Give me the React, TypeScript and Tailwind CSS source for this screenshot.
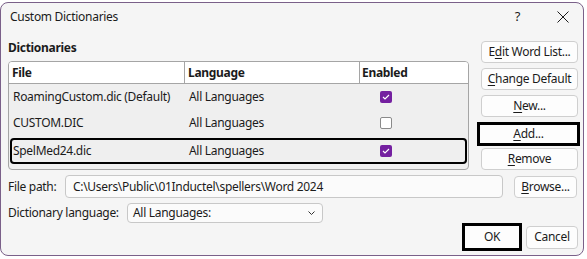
import React from "react";

const font = { fontFamily: '"Noto Sans", "Segoe UI", Arial, sans-serif' };

function U({ children }: { children: React.ReactNode }) {
  return <span className="underline underline-offset-[2px] decoration-[1px]">{children}</span>;
}

function Btn({ children, className = "" }: { children: React.ReactNode; className?: string }) {
  return (
    <div
      className={
        "flex items-center justify-center rounded-[4px] border border-[#cfcfcf] bg-[#fdfdfd] text-[12px] text-[#1b1b1b] " +
        className
      }
    >
      {children}
    </div>
  );
}

function Check({ checked }: { checked: boolean }) {
  if (checked)
    return (
      <div className="flex h-[12px] w-[12px] items-center justify-center rounded-[2px] bg-[#7420a0]">
        <svg width="8" height="6" viewBox="0 0 8 6">
          <path d="M1 3 L3 5 L7 1" stroke="white" strokeWidth="1.1" fill="none" />
        </svg>
      </div>
    );
  return <div className="h-[12px] w-[12px] rounded-[2px] border border-[#8a8a8a] bg-white" />;
}

function Row({ file, checked, selected }: { file: string; checked: boolean; selected?: boolean }) {
  return (
    <div
      className={
        "flex items-center text-[12px] text-[#1b1b1b] " +
        (selected ? "mx-[1px] mt-[2px] h-[26px] rounded-[4px] border-2 border-black" : "h-[26px]")
      }
    >
      <div className={selected ? "w-[173px] pl-[1px]" : "w-[176px] pl-[4px]"}>{file}</div>
      <div className="w-[175px] pl-[4px]">All Languages</div>
      <div className="flex flex-1 justify-start pl-[20px]">
        <Check checked={checked} />
      </div>
    </div>
  );
}

export default function App() {
  return (
    <div className="h-[259px] w-[587px] overflow-hidden bg-white pt-[2px] tracking-[-0.3px]" style={font}>
      <div className="flex h-[254px] w-[584px] flex-col rounded-[8px] border border-[#7a6089] bg-[#f5f5f5]">
        {/* title bar */}
        <div className="flex h-[28px] items-center pl-[9px] text-[12px] text-[#1b1b1b]">
          <div className="flex-1">Custom Dictionaries</div>
          <div className="mr-[37px] text-[13px]">?</div>
          <svg width="12" height="12" viewBox="0 0 12 12" className="mr-[14px]">
            <path d="M0.5 0.5 L11.5 11.5 M11.5 0.5 L0.5 11.5" stroke="#1b1b1b" strokeWidth="1" />
          </svg>
        </div>
        {/* main */}
        <div className="flex pl-[7px]">
          <div className="flex w-[461px] flex-col pt-[9px]">
            <div className="h-[16px] text-[12px] font-bold leading-[16px] text-[#1b1b1b]">Dictionaries</div>
            <div className="mt-[5px] h-[109px] overflow-hidden rounded-[4px] border border-[#a5a5a5] bg-[#efefef]">
              <div className="flex h-[22px] items-center border-b border-[#a5a5a5] bg-white text-[12px] font-bold text-[#1b1b1b]">
                <div className="flex h-full w-[176px] items-center border-r border-[#a5a5a5] pl-[3px]">File</div>
                <div className="flex h-full w-[175px] items-center border-r border-[#a5a5a5] pl-[3px]">Language</div>
                <div className="flex h-full flex-1 items-center pl-[2px]">Enabled</div>
              </div>
              <Row file="RoamingCustom.dic (Default)" checked />
              <Row file="CUSTOM.DIC" checked={false} />
              <Row file="SpelMed24.dic" checked selected />
            </div>
          </div>
          <div className="ml-[12px] flex w-[97px] flex-col pt-[10px]">
            <Btn className="h-[22px]">
              <span>
                E<U>d</U>it Word List...
              </span>
            </Btn>
            <Btn className="mt-[5px] h-[22px]">
              <span>
                <U>C</U>hange Default
              </span>
            </Btn>
            <Btn className="mt-[5px] h-[22px]">
              <span>
                <U>N</U>ew...
              </span>
            </Btn>
            <div className="ml-[-4px] mr-[-2px] mt-[5px] flex h-[24px] items-center justify-center border-[3px] border-black bg-[#fdfdfd] text-[12px] text-[#1b1b1b]">
              <span>
                <U>A</U>dd...
              </span>
            </div>
            <Btn className="mt-[2px] h-[22px]">
              <span>
                <U>R</U>emove
              </span>
            </Btn>
          </div>
        </div>
        {/* file path */}
        <div className="mt-[5px] flex h-[23px] items-center pl-[7px] text-[12px] text-[#1b1b1b]">
          <div className="w-[57px]">File path:</div>
          <div className="flex h-full w-[438px] items-center rounded-[4px] border border-[#c8c8c8] bg-[#fbfbfb] pl-[7px]">
            C:\Users\Public\01Inductel\spellers\Word 2024
          </div>
          <Btn className="ml-[11px] h-[22px] w-[63px]">
            <span>
              <U>B</U>rowse...
            </span>
          </Btn>
        </div>
        {/* dictionary language */}
        <div className="mt-[5px] flex h-[20px] items-center pl-[7px] text-[12px] text-[#1b1b1b]">
          <div className="w-[119px]">Dictionary language:</div>
          <div className="flex h-full w-[196px] items-center rounded-[4px] border border-[#c8c8c8] bg-[#fbfbfb] pl-[5px] pr-[7px]">
            <div className="flex-1">All Languages:</div>
            <svg width="7" height="4" viewBox="0 0 7 4">
              <path d="M0.5 0.5 L3.5 3.5 L6.5 0.5" stroke="#333" strokeWidth="1" fill="none" />
            </svg>
          </div>
        </div>
        {/* bottom buttons */}
        <div className="flex items-center justify-end pr-[5px] text-[12px] text-[#1b1b1b]">
          <div className="flex h-[28px] w-[60px] items-center justify-center border-[3px] border-black bg-[#fdfdfd]">OK</div>
          <Btn className="ml-[4px] h-[23px] w-[52px]">Cancel</Btn>
        </div>
      </div>
    </div>
  );
}
